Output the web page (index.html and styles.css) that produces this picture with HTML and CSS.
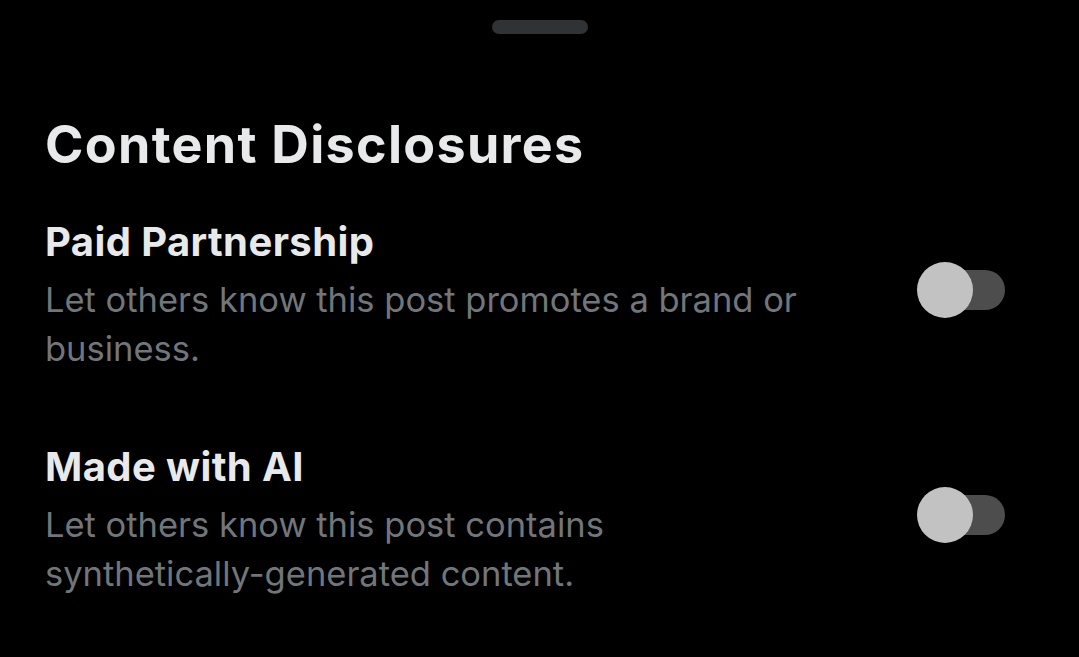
FILE: index.html
```html
<!DOCTYPE html>
<html>
<head>
<meta charset="UTF-8">
<title>Content Disclosures</title>
<link rel="stylesheet" href="styles.css">
</head>
<body>
<div class="sheet">
	<div class="grabber"></div>
	<h1 class="sheet-title">Content Disclosures</h1>

	<div class="option">
		<div class="option-text">
			<h2 class="option-name">Paid Partnership</h2>
			<p class="option-desc">Let others know this post promotes a brand or business.</p>
		</div>
		<div class="switch">
			<div class="switch-track"></div>
			<div class="switch-thumb"></div>
		</div>
	</div>

	<div class="option">
		<div class="option-text">
			<h2 class="option-name">Made with AI</h2>
			<p class="option-desc">Let others know this post contains <span class="nowrap">synthetically-generated</span> content.</p>
		</div>
		<div class="switch">
			<div class="switch-track"></div>
			<div class="switch-thumb"></div>
		</div>
	</div>
</div>
</body>
</html>
```

FILE: styles.css
```css
body {
	margin : 0;
	background-color : #000000;
	font-family : Inter, "Liberation Sans", sans-serif;
}
.sheet {
	padding : 20px 74px 0 45px;
}
.grabber {
	width : 96px;
	height : 14px;
	border-radius : 7px;
	background-color : #2f3336;
	margin : 0 auto;
	margin-right : calc(50% - 48px - 15px);
}
.sheet-title {
	margin : 81px 0 0 0;
	font-size : 52px;
	line-height : 60px;
	letter-spacing : 1.3px;
	font-weight : 700;
	color : #e7e9ea;
}
.option {
	display : flex;
	align-items : center;
	justify-content : space-between;
	margin-top : 43px;
}
.option + .option {
	margin-top : 70px;
}
.option-text {
	width : 800px;
}
.option-name {
	margin : 0;
	font-size : 40px;
	line-height : 48px;
	letter-spacing : 0.4px;
	font-weight : 700;
	color : #e7e9ea;
}
.option-desc {
	margin : 9px 0 0 0;
	font-size : 34.5px;
	line-height : 49px;
	color : #71767b;
}
.nowrap {
	white-space : nowrap;
}
.switch {
	position : relative;
	width : 88px;
	height : 56px;
	margin-bottom : 11px;
	flex-shrink : 0;
}
.switch-track {
	position : absolute;
	left : 8px;
	top : 8px;
	width : 80px;
	height : 40px;
	border-radius : 20px;
	background-color : #4d4d4d;
}
.switch-thumb {
	position : absolute;
	left : 0;
	top : 0;
	width : 56px;
	height : 56px;
	border-radius : 50%;
	background-color : #c2c2c2;
}
```
